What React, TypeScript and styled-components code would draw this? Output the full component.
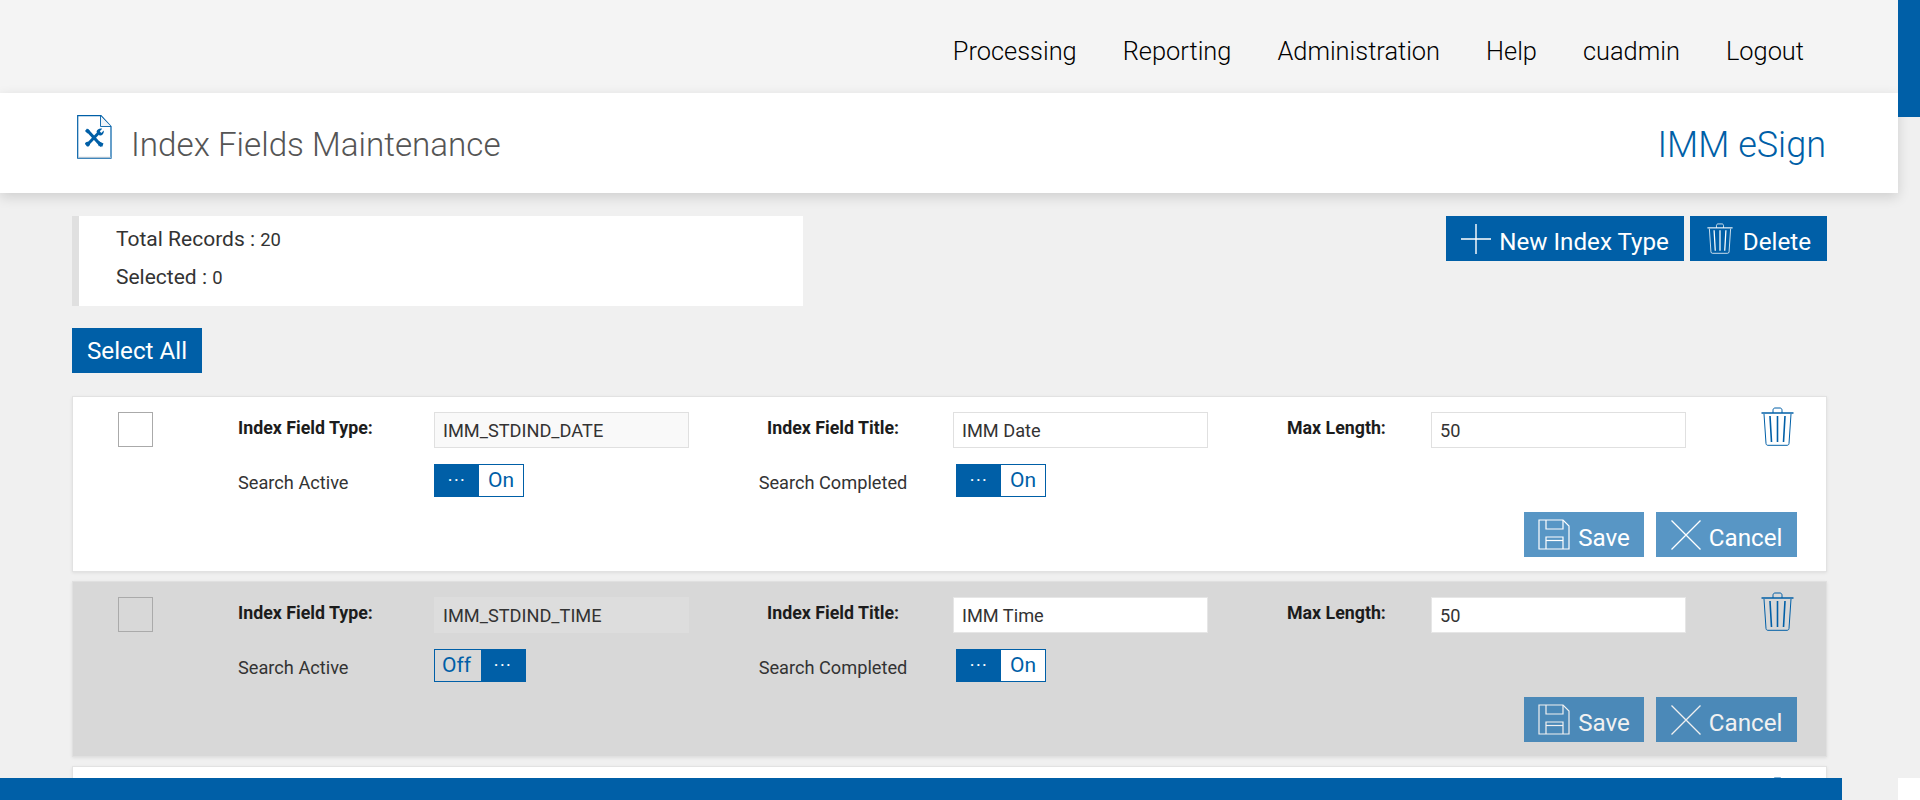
import React from "react";
import styled, { createGlobalStyle } from "styled-components";

const BLUE = "#005fa7";

const Global = createGlobalStyle`
  html, body { margin: 0; padding: 0; background: #f0f0f0; overflow: hidden; }
  body { font-family: Roboto, "Liberation Sans", sans-serif; color: #222; }
  * { box-sizing: border-box; }
`;

const Page = styled.div`
  position: relative;
  width: 1920px;
  height: 800px;
  overflow: hidden;
  background: #f0f0f0;
`;
const Main = styled.div`
  width: 1898px;
`;
const TopBar = styled.nav`
  height: 93px;
  background: #f4f4f4;
  display: flex;
  justify-content: flex-end;
  align-items: center;
  gap: 46px;
  padding: 9px 94px 0 0;
`;
const NavItem = styled.a`
  font-size: 25.4px;
  font-weight: 300;
  color: #000;
`;
const Header = styled.header`
  position: relative;
  height: 100px;
  background: #fff;
  box-shadow: 0 4px 12px rgba(0, 0, 0, 0.14);
  display: flex;
  align-items: flex-start;
  justify-content: space-between;
  padding: 22px 72px 0 77px;
`;
const TitleGroup = styled.div`
  display: flex;
  align-items: flex-start;
  gap: 19px;
`;
const Title = styled.h1`
  margin: 10px 0 0;
  font-size: 33.2px;
  line-height: 40px;
  font-weight: 300;
  color: #555;
`;
const Brand = styled.div`
  margin-top: 8px;
  font-size: 36px;
  line-height: 44px;
  font-weight: 300;
  color: ${BLUE};
`;
const Content = styled.main`
  padding: 23px 71px 0 72px;
`;
const TopRow = styled.div`
  display: flex;
  justify-content: space-between;
  align-items: flex-start;
`;
const Stats = styled.div`
  width: 731px;
  height: 90px;
  background: #fff;
  border-left: 7px solid #e0e0e0;
  padding: 11px 0 0 37px;
`;
const StatLine = styled.div`
  height: 38px;
  line-height: 24px;
  font-size: 21px;
  color: #333;
`;
const StatValue = styled.span`
  font-size: 18.4px;
`;
const ButtonRow = styled.div`
  display: flex;
  gap: 6px;
`;
const Btn = styled.button<{ $muted?: boolean }>`
  height: 45px;
  border: none;
  padding: 0 ${(p) => (p.$muted ? 14.5 : 15)}px;
  display: flex;
  align-items: center;
  gap: 8px;
  background: ${BLUE};
  opacity: ${(p) => (p.$muted ? 0.65 : 1)};
  color: #fff;
  font-family: Roboto, sans-serif;
  font-size: 24.2px;
  font-weight: 400;
  white-space: nowrap;
`;
const DeleteBtn = styled(Btn)`
  padding: 0 16px 0 17px;
  gap: 10px;
`;
const BtnText = styled.span`
  position: relative;
  top: 3px;
`;
const SelectAll = styled(Btn)`
  margin: 22px 0 23px;
`;
const Card = styled.section<{ $selected?: boolean }>`
  height: 176px;
  margin-bottom: 9px;
  padding: 15px 29px 0 45px;
  background: ${(p) => (p.$selected ? "#d8d8d8" : "#fff")};
  border: 1px solid ${(p) => (p.$selected ? "#e0e0e0" : "#e2e2e2")};
  box-shadow: 0 1px 3px rgba(0, 0, 0, 0.08);
`;
const CardGrid = styled.div`
  display: grid;
  grid-template-columns: 120px 196px 316px 203px 334px 144px 330px auto;
  grid-template-rows: 36px 33px;
  row-gap: 16px;
`;
const Check = styled.div`
  width: 35px;
  height: 35px;
  border: 1px solid #aaa;
`;
const Label = styled.div<{ $center?: boolean; $bold?: boolean }>`
  width: ${(p) => (p.$center ? "166px" : "auto")};
  text-align: ${(p) => (p.$center ? "center" : "left")};
  font-size: 18.2px;
  line-height: 24px;
  font-weight: ${(p) => (p.$bold ? 700 : 400)};
  color: ${(p) => (p.$bold ? "#1c1c1c" : "#333")};
  margin-top: ${(p) => (p.$bold ? 4 : 7)}px;
  white-space: nowrap;
`;
const BoldLabel = styled(Label)<{ $indent?: number }>`
  font-size: 17.8px;
  padding-left: ${(p) => p.$indent ?? 0}px;
`;
const Field = styled.div<{ $readOnly?: boolean; $selected?: boolean }>`
  width: 255px;
  height: 36px;
  padding: 0 8px;
  display: flex;
  align-items: center;
  font-size: 18.2px;
  color: #333;
  background: ${(p) =>
    p.$readOnly ? (p.$selected ? "#dddddd" : "#f9f9f9") : "#fff"};
  border: 1px solid ${(p) => (p.$selected ? (p.$readOnly ? "#dddddd" : "#e6e6e6") : "#e0e0e0")};
`;
const TrashButton = styled.div`
  margin: -5px 0 0 0;
  width: 33px;
  height: 39px;
  color: ${BLUE};
`;
const Toggle = styled.div`
  display: inline-flex;
  height: 33px;
  width: max-content;
  border: 1px solid ${BLUE};
`;
const ToggleHandle = styled.span`
  width: 44px;
  background: ${BLUE};
  color: #fff;
  display: flex;
  align-items: center;
  justify-content: center;
  font-size: 18px;
  letter-spacing: 1.5px;
  padding-bottom: 1px;
`;
const ToggleState = styled.span<{ $wide?: boolean }>`
  width: ${(p) => (p.$wide ? 46 : 44)}px;
  color: ${BLUE};
  display: flex;
  align-items: center;
  justify-content: center;
  font-size: 21px;
  padding: 0 ${(p) => (p.$wide ? 3 : 0)}px 2px 0;
`;
const ToggleOn = styled.div<{ $shift?: boolean }>`
  background: #fff;
  display: inline-flex;
  width: max-content;
  margin-left: ${(p) => (p.$shift ? 3 : 0)}px;
`;
const ToggleOff = styled(ToggleOn)`
  background: transparent;
`;
const CardActions = styled.div`
  display: flex;
  justify-content: flex-end;
  gap: 12px;
  margin-top: 15px;
`;
const Footer = styled.div`
  position: absolute;
  left: 0;
  bottom: 0;
  width: 1842px;
  height: 22px;
  background: ${BLUE};
`;
const ScrollThumb = styled.div`
  position: absolute;
  top: 0;
  right: 0;
  width: 22px;
  height: 117px;
  background: ${BLUE};
`;
const ScrollCorner = styled.div`
  position: absolute;
  bottom: 0;
  right: 0;
  width: 22px;
  height: 22px;
  background: #fff;
`;
const PartialCard = styled(Card)`
  display: flex;
  justify-content: flex-end;
  padding-right: 32px;
`;

const TrashIcon = ({ size = 33, h = 39 }: { size?: number; h?: number }) => (
  <svg width={size} height={h} viewBox="0 0 33 39" fill="none" stroke="currentColor" strokeWidth="1">
    <path d="M12 6V3.2C12 1.8 13 1 14 1H19C20 1 21 1.8 21 3.2V6" />
    <path d="M0.5 6H32.5" strokeWidth="1.4" />
    <path d="M3 7L5 36.5C5.1 37.6 5.8 38.3 7 38.3H26C27.2 38.3 27.9 37.6 28 36.5L30 7" />
    <path d="M9 9L10.5 35M16.5 9V35M24 9L22.5 35" strokeWidth="1.6" />
  </svg>
);
const PlusIcon = () => (
  <svg width="30" height="30" viewBox="0 0 30 30" stroke="currentColor" strokeWidth="1.4" fill="none">
    <path d="M15 0V30M0 15H30" />
  </svg>
);
const SaveIcon = () => (
  <svg width="32" height="31" viewBox="0 0 32 31" fill="none" stroke="currentColor" strokeWidth="1.2">
    <path d="M1 1H25L31 7V30H1Z" />
    <path d="M8 1V10H25V1" />
    <path d="M8 30V18H25V30" />
    <path d="M8 21.5H25" />
  </svg>
);
const CrossIcon = () => (
  <svg width="30" height="30" viewBox="0 0 30 30" fill="none" stroke="currentColor" strokeWidth="1.3">
    <path d="M0.5 0.5L29.5 29.5M29.5 0.5L0.5 29.5" />
  </svg>
);
const FileToolIcon = () => (
  <svg width="35" height="44" viewBox="0 0 35 44" fill="none">
    <path d="M0.7 0.7H24L34 11.5V43.2H0.7Z" stroke={BLUE} strokeWidth="1.2" fill="#fff" />
    <path d="M23.5 1V11.5H34" stroke={BLUE} strokeWidth="0.9" fill="#f0f4f8" />
    <path d="M1 42.3H34" stroke="#b9c6d2" strokeWidth="1" />
    <path d="M10 15L24.5 31" stroke={BLUE} strokeWidth="3.2" />
    <path d="M8 16L10 13.5L13 16L10.5 18.5Z" fill={BLUE} />
    <path d="M22 17.5L11 29" stroke={BLUE} strokeWidth="3" />
    <path d="M19.5 17C19.8 14.5 22.5 13 25.2 13.7L22.8 16.3L24.3 18L26.7 15.4C27.2 18 25.6 20.5 22.6 20.6Z" fill={BLUE} />
    <path d="M8 29C8 27.5 9.5 26.5 11 26.8L13 29C13 30.6 11.5 32 10 31.5Z" fill={BLUE} />
    <path d="M21.5 26L26.5 28.5L25 32.3L23.5 30L21.8 31.3L20.5 27Z" fill={BLUE} />
  </svg>
);

type Row = {
  type: string;
  title: string;
  selected?: boolean;
  activeOn: boolean;
};
const rows: Row[] = [
  { type: "IMM_STDIND_DATE", title: "IMM Date", activeOn: true },
  { type: "IMM_STDIND_TIME", title: "IMM Time", activeOn: false, selected: true },
];

const SwitchOn = ({ shift }: { shift?: boolean }) => (
  <ToggleOn $shift={shift}>
    <Toggle>
      <ToggleHandle>···</ToggleHandle>
      <ToggleState>On</ToggleState>
    </Toggle>
  </ToggleOn>
);
const SwitchOff = () => (
  <ToggleOff>
    <Toggle>
      <ToggleState $wide>Off</ToggleState>
      <ToggleHandle>···</ToggleHandle>
    </Toggle>
  </ToggleOff>
);

const IndexCard = ({ row }: { row: Row }) => (
  <Card $selected={row.selected}>
    <CardGrid>
      <Check />
      <BoldLabel $bold>Index Field Type:</BoldLabel>
      <div>
        <Field $readOnly $selected={row.selected}>{row.type}</Field>
      </div>
      <BoldLabel $bold $indent={17}>Index Field Title:</BoldLabel>
      <div>
        <Field $selected={row.selected}>{row.title}</Field>
      </div>
      <BoldLabel $bold>Max Length:</BoldLabel>
      <div>
        <Field $selected={row.selected}>50</Field>
      </div>
      <TrashButton><TrashIcon /></TrashButton>
      <div />
      <Label>Search Active</Label>
      <div>{row.activeOn ? <SwitchOn /> : <SwitchOff />}</div>
      <Label $center>Search Completed</Label>
      <div><SwitchOn shift /></div>
    </CardGrid>
    <CardActions>
      <Btn $muted><SaveIcon /><BtnText>Save</BtnText></Btn>
      <Btn $muted><CrossIcon /><BtnText>Cancel</BtnText></Btn>
    </CardActions>
  </Card>
);

export default function App() {
  return (
    <Page>
      <Global />
      <Main>
        <TopBar>
          {["Processing", "Reporting", "Administration", "Help", "cuadmin", "Logout"].map((n) => (
            <NavItem key={n}>{n}</NavItem>
          ))}
        </TopBar>
        <Header>
          <TitleGroup>
            <FileToolIcon />
            <Title>Index Fields Maintenance</Title>
          </TitleGroup>
          <Brand>IMM eSign</Brand>
        </Header>
        <Content>
          <TopRow>
            <Stats>
              <StatLine>Total Records : <StatValue>20</StatValue></StatLine>
              <StatLine>Selected : <StatValue>0</StatValue></StatLine>
            </Stats>
            <ButtonRow>
              <Btn><PlusIcon /><BtnText>New Index Type</BtnText></Btn>
              <DeleteBtn><TrashIcon size={26} h={31} /><BtnText>Delete</BtnText></DeleteBtn>
            </ButtonRow>
          </TopRow>
          <SelectAll>Select All</SelectAll>
          {rows.map((r) => (
            <IndexCard key={r.type} row={r} />
          ))}
          <PartialCard>
            <TrashButton><TrashIcon /></TrashButton>
          </PartialCard>
        </Content>
      </Main>
      <ScrollThumb />
      <Footer />
      <ScrollCorner />
    </Page>
  );
}
